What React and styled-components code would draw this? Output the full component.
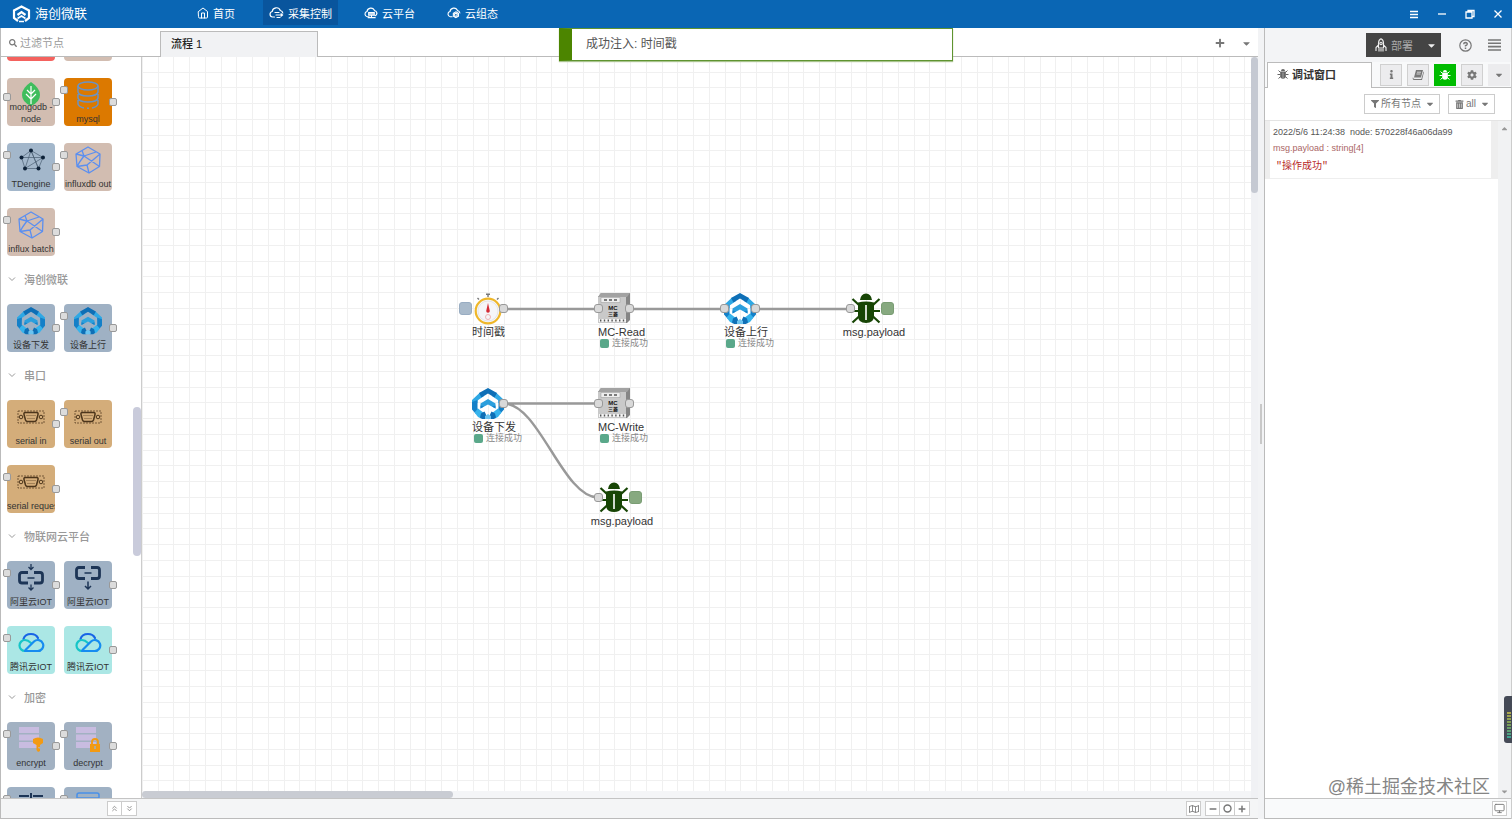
import React from 'react'
import styled, { createGlobalStyle } from 'styled-components'
import { FaSearch, FaPlus, FaMinus, FaCaretDown, FaCaretUp, FaInfo, FaCog, FaFilter, FaTrashAlt, FaRegMap } from 'react-icons/fa'
import { FiHome } from 'react-icons/fi'
import { LuMonitor, LuChevronsUp, LuChevronsDown } from 'react-icons/lu'

const GlobalStyle = createGlobalStyle`
    * { box-sizing: border-box; }
    body { margin: 0; overflow: hidden; }
    body, button, input {
        font-family: "Liberation Sans", "Noto Sans CJK SC", sans-serif;
        font-size: 11px;
        color: #444;
    }
    button { padding: 0; border: 0; background: none; cursor: pointer; }
    svg { display: block; flex: none; }
`

const Page = styled.div`
    display: flex;
    flex-direction: column;
    height: 100vh;
    background: #fff;
`

/* top bar */

const Header = styled.header`
    display: flex;
    flex: none;
    height: 28px;
    background: #0a66b4;
    color: #fff;
`

const Brand = styled.div`
    display: flex;
    align-items: center;
    gap: 4px;
    width: 191px;
    padding-left: 12px;
    font-size: 13px;
    line-height: 16px;
`

const Nav = styled.nav`
    display: flex;
    gap: 20px;
    flex: 1;
    height: 25px;
`

const NavLink = styled.a`
    display: flex;
    align-items: center;
    gap: 4px;
    padding: 0 6px;
    color: #fff;
    text-decoration: none;
    white-space: nowrap;
    background: ${props => props.$active ? '#09559d' : 'transparent'};
    &:first-child { margin-right: 2px; }
`

const WindowButtons = styled.div`
    display: flex;
    align-items: center;
    gap: 16px;
    padding-right: 8px;
`

const WindowButton = styled.button`
    width: 12px;
    height: 12px;
    color: #fff;
`

const Main = styled.div`
    display: flex;
    flex: 1;
    min-height: 0;
`

const Editor = styled.div`
    display: flex;
    flex-direction: column;
    flex: 1;
    min-width: 0;
    border-left: 1px solid #bbb;
`

const TopRow = styled.div`
    display: flex;
    flex: none;
    height: 29px;
    border-bottom: 1px solid #bbb;
`

const SearchBox = styled.label`
    display: flex;
    align-items: center;
    gap: 3px;
    width: 159px;
    padding: 2px 0 0 8px;
    color: #777;
`

const SearchInput = styled.input`
    width: 120px;
    padding: 0;
    border: 0;
    outline: none;
    &::placeholder { color: #999; }
`

const Tabs = styled.div`
    display: flex;
    align-items: flex-end;
    flex: 1;
`

const FlowTab = styled.button`
    width: 158px;
    height: 26px;
    margin-bottom: -1px;
    padding: 0 0 4px 10px;
    border: 1px solid #bbb;
    border-bottom: 0;
    background: #f1f2f4;
    color: #222;
    font-weight: 500;
    text-align: left;
`

const TabTools = styled.div`
    display: flex;
    align-items: center;
    gap: 16px;
    padding: 2px 6px 0 0;
    button { color: #777; }
`

const Workspace = styled.div`
    display: flex;
    flex: 1;
    min-height: 0;
`

/* palette */

const Palette = styled.aside`
    position: relative;
    width: 141px;
    overflow: hidden;
    border-right: 1px solid #ccc;
`

const PaletteList = styled.div`
    margin-top: -44px;
    padding-left: 6px;
`

const PaletteThumb = styled.div`
    position: absolute;
    top: 350px;
    right: 0;
    width: 8px;
    height: 149px;
    border-radius: 4px;
    background: #c9cbdb;
`

const Category = styled.button`
    display: flex;
    align-items: center;
    gap: 7px;
    height: 48px;
    padding-bottom: 2px;
    color: #999;
    font-weight: 500;
`

const TileGrid = styled.div`
    display: grid;
    grid-template-columns: 48px 48px;
    gap: 17px 9px;
`

const TileBox = styled.div`
    position: relative;
    height: 48px;
    border-radius: 4px;
    background: ${props => props.$color};
`

const TileIcon = styled.div`
    display: flex;
    justify-content: center;
    padding-top: 3px;
`

const TileLabel = styled.div`
    position: absolute;
    left: 0;
    right: 0;
    bottom: 1px;
    overflow: hidden;
    font-size: 9px;
    line-height: 12px;
    text-align: center;
    white-space: ${props => props.$wrap ? 'normal' : 'nowrap'};
    color: #333;
`

const TilePort = styled.i`
    position: absolute;
    top: ${props => props.$top}px;
    ${props => props.$side}: ${props => props.$side === 'left' ? -4 : -5}px;
    width: 8px;
    height: 8px;
    border: 1px solid #999;
    border-radius: 2px;
    background: #dcdcdc;
`

/* canvas */

const CanvasColumn = styled.div`
    display: flex;
    flex-direction: column;
    flex: 1;
    min-width: 0;
`

const Canvas = styled.div`
    position: relative;
    flex: 1;
    overflow: hidden;
`

const CanvasDrawing = styled.svg`
    width: 100%;
    height: 100%;
`

const HScroll = styled.div`
    height: 7px;
    background: #f4f5f7;
    &::before {
        content: '';
        display: block;
        width: 28%;
        height: 7px;
        border-radius: 4px;
        background: #c9ccd3;
    }
`

const VScroll = styled.div`
    width: 7px;
    background: #f0f1f4;
    &::before {
        content: '';
        display: block;
        width: 7px;
        height: 136px;
        border-radius: 4px;
        background: #c5c9d2;
    }
`

const FlowNode = styled.div`
    position: absolute;
    left: ${props => props.$x}px;
    top: ${props => props.$y}px;
    width: 32px;
`

const NodeIcon = styled.div`
    height: 32px;
`

const NodeLabel = styled.div`
    display: flex;
    justify-content: ${props => props.$center ? 'center' : 'flex-start'};
    margin: 0 ${props => props.$center ? '-24px 0 -8px' : '0'};
    padding-top: 1px;
    line-height: 13px;
    white-space: nowrap;
    color: #333;
`

const NodeStatus = styled.div`
    display: flex;
    align-items: center;
    gap: 3px;
    padding-left: 2px;
    font-size: 9px;
    line-height: 9px;
    white-space: nowrap;
    color: #888;
    &::before {
        content: '';
        flex: none;
        width: 9px;
        height: 9px;
        border-radius: 2px;
        background: #5aa88a;
    }
`

const NodePort = styled.i`
    position: absolute;
    top: 11px;
    ${props => props.$side}: -4px;
    width: 9px;
    height: 9px;
    border: 1px solid #999;
    border-radius: 3px;
    background: #d9d9d9;
`

const NodeButton = styled.button`
    position: absolute;
    top: 9px;
    ${props => props.$side}: ${props => props.$side === 'left' ? -13 : -12}px;
    width: 13px;
    height: 13px;
    border: 1px solid ${props => props.$line};
    border-radius: 3px;
    background: ${props => props.$color};
`

const Footer = styled.footer`
    display: flex;
    align-items: center;
    flex: none;
    height: 21px;
    border-top: 1px solid #c4c4c4;
    border-bottom: 1px solid #bbb;
    background: ${props => props.$light ? '#f9fafb' : '#f4f5f6'};
`

const FooterGroup = styled.div`
    display: flex;
    margin-left: ${props => props.$push ? 'auto' : '4px'};
    margin-right: ${props => props.$end || 0}px;
`

const FooterButton = styled.button`
    display: flex;
    align-items: center;
    justify-content: center;
    width: 15px;
    height: 15px;
    border: 1px solid #ccc;
    background: #fff;
    color: #777;
    & + & { border-left: 0; }
`

const PaletteTools = styled.div`
    display: flex;
    justify-content: flex-end;
    width: 136px;
`

const Separator = styled.div`
    display: flex;
    align-items: center;
    justify-content: center;
    width: 6px;
    background: #f2f3f5;
    &::before {
        content: '';
        width: 2px;
        height: 40px;
        background: #c8c8c8;
    }
`

/* sidebar */

const Sidebar = styled.aside`
    display: flex;
    flex-direction: column;
    width: 248px;
    border-left: 1px solid #bbb;
    border-right: 1px solid #ccc;
`

const SidebarTop = styled.div`
    display: flex;
    align-items: center;
    justify-content: flex-end;
    flex: none;
    height: 34px;
    padding-right: 10px;
    background: #f3f4f6;
`

const Deploy = styled.button`
    display: flex;
    align-items: center;
    gap: 4px;
    height: 24px;
    margin-right: 18px;
    padding: 0 4px 0 9px;
    background: #444;
    color: #eee;
    span { margin-right: 9px; color: #aaa; }
`

const TopButton = styled.button`
    margin-left: ${props => props.$gap || 0}px;
    color: #777;
`

const SidebarTabs = styled.div`
    display: flex;
    align-items: center;
    flex: none;
    height: 26px;
    padding-left: 2px;
    border-bottom: 1px solid #bbb;
    background: #f8f9fa;
`

const SidebarTab = styled.button`
    display: flex;
    align-items: center;
    gap: 3px;
    width: 105px;
    height: 26px;
    padding: 0 0 2px 9px;
    border: 1px solid #bbb;
    border-bottom: 0;
    background: #fff;
    color: #333;
    font-weight: bold;
    svg { color: #666; }
`

const TabButton = styled.button`
    display: flex;
    align-items: center;
    justify-content: center;
    width: 22px;
    height: 22px;
    margin-left: ${props => props.$first ? 8 : 5}px;
    border: 1px solid ${props => props.$active ? '#0b0' : '#d0d0d0'};
    background: ${props => props.$active ? '#00bc00' : '#ececee'};
    color: ${props => props.$active ? '#fff' : '#777'};
    &:last-child { border-color: #ececee; }
`

const DebugTools = styled.div`
    display: flex;
    align-items: center;
    justify-content: flex-end;
    gap: 8px;
    flex: none;
    height: 33px;
    padding-right: 16px;
    border-bottom: 1px solid #e4e4e4;
`

const ToolButton = styled.button`
    display: flex;
    align-items: center;
    gap: 2px;
    height: 20px;
    padding: 0 4px 0 6px;
    border: 1px solid #ccc;
    background: #fff;
    color: #777;
    font-size: 10px;
    line-height: 14px;
    svg:last-child { margin-left: 2px; }
`

const DebugBody = styled.div`
    display: flex;
    flex: 1;
    min-height: 0;
`

const DebugList = styled.div`
    flex: 1;
`

const Message = styled.div`
    height: 58px;
    padding: 5px 0 0 3px;
    border: solid #eee;
    border-width: 0 7px 1px 5px;
    font-size: 9px;
    line-height: 12px;
    white-space: nowrap;
`

const Meta = styled.div`
    display: flex;
    gap: 5px;
    color: #555;
`

const Topic = styled.div`
    padding-top: 4px;
    color: #a66;
`

const Value = styled.div`
    padding: 5px 0 0 3px;
    font-family: "Liberation Mono", "Noto Sans CJK SC", monospace;
    font-size: 10px;
    line-height: 16px;
    color: #b72828;
`

const DebugScroll = styled.div`
    display: flex;
    flex-direction: column;
    align-items: center;
    justify-content: space-between;
    width: 13px;
    padding: 3px 0 2px;
    background: #f1f2f3;
    color: #999;
`

/* overlays */

const Notification = styled.div`
    position: absolute;
    top: 28px;
    left: 50%;
    width: 394px;
    height: 33px;
    margin-left: -197px;
    padding-left: 14px;
    border: 1px solid #5f9430;
    border-left: 13px solid #4c8500;
    box-shadow: 0 1px 1px #a9c48f;
    background: #fff;
    font-size: 12px;
    line-height: 30px;
    color: #555;
`

const Watermark = styled.div`
    position: absolute;
    right: 22px;
    bottom: 19px;
    font-size: 18px;
    line-height: 26px;
    color: #858585;
`

const Meter = styled.div`
    position: absolute;
    right: 0;
    bottom: 76px;
    width: 8px;
    height: 47px;
    padding: 15px 1px 5px 3px;
    border-radius: 3px 0 0 3px;
    background: #454a56;
    &::before {
        content: '';
        display: block;
        height: 27px;
        background: repeating-linear-gradient(#454a56 0 1px, transparent 1px 3px), linear-gradient(#b5a94c, #7a9c55, #3aa596);
    }
`

/* icons */

const LogoIcon = () => (
    <svg width="19" height="18" viewBox="0 0 19 18" fill="none" stroke="#fff" strokeWidth="2.2">
        <path d="M6 16 L2 13 V5.5 L9.5 1.5 L17 5.5 V13 L13 16" />
        <path d="M5.5 10 L9.5 7 L13.5 10" />
        <path d="M5.5 13.5 L9.5 11 L13.5 13.5 M7 16.5 H12" strokeWidth="1.6" />
    </svg>
)

const CloudIcon = ({ kind }) => (
    <svg width={kind === 'flow' ? 15 : 14} height="13" viewBox="0 0 15 13" fill="none" stroke="currentColor" strokeWidth="1.2" strokeLinecap="round">
        <path d="M5.5 11 H3.5 A2.8 2.8 0 0 1 3.2 5.5 A4.2 4.2 0 0 1 11.3 4.5 A3 3 0 0 1 13.8 7" />
        {kind === 'flow' && <path d="M6 6.5 H10 M7 9 H13 M12 7.8 L13.5 9 L12 10.2 M8 11.5 H11" />}
        {kind === 'server' && <path d="M5 6.5 H11 V9.5 H5 Z M6 8 H10 M8 9.5 V12 M4.5 12 H12 M13.8 7 A3 3 0 0 1 12 10" />}
        {kind === 'gear' && <path d="M9.5 5.8 L12.3 7.4 V10.5 L9.5 12 L6.8 10.5 V7.4 Z M8 9 A1.5 1.5 0 1 0 11 9 A1.5 1.5 0 1 0 8 9" />}
    </svg>
)

const SmallBug = () => (
    <svg width="12" height="12" viewBox="0 0 12 12">
        <path fill="currentColor" d="M4 3 A2 2 0 0 1 8 3 Z M3.2 3.6 H8.8 V8 A2.8 2.8 0 0 1 3.2 8 Z" />
        <path fill="none" stroke="currentColor" d="M1.5 2.5 L3.5 4.5 M10.5 2.5 L8.5 4.5 M.5 6.5 H3.5 M8.5 6.5 H11.5 M1.5 10.5 L3.7 8.5 M10.5 10.5 L8.3 8.5" />
        <path stroke="#fff" strokeOpacity=".6" strokeWidth=".7" d="M6 4.5 V10" />
    </svg>
)

const BookIcon = () => (
    <svg width="12" height="11" viewBox="0 0 12 11">
        <path fill="currentColor" d="M4 1 H11 L9 8.5 H2 Z M1 8 Q1 10 2.5 10 H9.3 L11.5 2.5 L12 3 L10 11 H2 Q0 10.5 1 8 Z" />
        <path stroke="#ececee" strokeWidth=".8" d="M5 3.2 H9 M4.5 5 H8.5" />
    </svg>
)

const HelpIcon = () => (
    <svg width="13" height="13" viewBox="0 0 13 13" fill="none" stroke="currentColor" strokeWidth="1.2">
        <circle cx="6.5" cy="6.5" r="5.7" />
        <path strokeWidth="1.5" d="M4.7 5.3 Q4.8 3.6 6.5 3.6 Q8.4 3.7 8.2 5.2 Q8 6.1 6.5 6.7 V7.6 M6.5 8.6 V10" />
    </svg>
)

const MenuIcon = () => (
    <svg width="13" height="12" viewBox="0 0 13 12" stroke="currentColor" strokeWidth="1.6">
        <path d="M0 1 H13 M0 4.3 H13 M0 7.6 H13 M0 11 H13" />
    </svg>
)

const RocketIcon = () => (
    <svg width="12" height="14" viewBox="0 0 12 14" fill="none" stroke="currentColor" strokeWidth="1.1">
        <path d="M3.5 10 V5 Q3.5 2 6 .8 Q8.5 2 8.5 5 V10 Z M3.5 7 L1 9.5 V13 M8.5 7 L11 9.5 V13 M4 11 V13.5 M6 11 V13.5 M8 11 V13.5" />
        <circle cx="6" cy="5.5" r="1.2" />
    </svg>
)

const DeviceIcon = ({ size = 32 }) => (
    <svg width={size} height={size} viewBox="0 0 32 32">
        <path fill="#2fa8e4" d="M8 4.5 L12 8 L5.5 12.5 V15 H0 V12 Z" />
        <path fill="#2fa8e4" d="M24 4.5 L20 8 L26.5 12.5 V15 H32 V12 Z" />
        <path fill="#0e6fb6" d="M16 0 L25 5 L22.5 9.5 L16 5.5 L9.5 9.5 L7 5 Z" />
        <path fill="#1480c8" d="M0 14 L5.5 12 V20.5 L7.5 22.5 L4 26 L0 21.5 Z" />
        <path fill="#1480c8" d="M32 14 L26.5 12 V20.5 L24.5 22.5 L28 26 L32 21.5 Z" />
        <path fill="#36b3ec" d="M2.5 24.5 L6 20.5 L12.5 25.5 L9 30.5 L6 29 Z" />
        <path fill="#36b3ec" d="M29.5 24.5 L26 20.5 L19.5 25.5 L23 30.5 L26 29 Z" />
        <path fill="#0e6fb6" d="M8 29.5 L9 25.5 L12.5 23.5 L14 26.5 V31 H10 Z" />
        <path fill="#0e6fb6" d="M24 29.5 L23 25.5 L19.5 23.5 L18 26.5 V31 H22 Z" />
        <path fill="#2b9fdd" d="M16 11 L23.5 15.5 V20.5 L16 16.5 L8.5 20.5 V15.5 Z" />
        <path fill="#1480c8" d="M8.5 17.5 L12 18.5 L8.5 20.5 Z M23.5 17.5 L20 18.5 L23.5 20.5 Z" />
        <path fill="#6bc4f0" d="M16 26 L19 28 V31 H13 V28 Z" />
    </svg>
)

const PlcIcon = () => (
    <svg width="32" height="31" viewBox="0 0 32 31">
        <path fill="#858585" d="M0 4 L3 0 H32 V27 L29 30 H0 Z" />
        <path fill="#a2a2a2" d="M0 4 L3 0 H32 L29 4 Z" />
        <path fill="#c9c9c9" d="M0 4 H28 V30 H0 Z" />
        <path fill="#eee" stroke="#999" strokeWidth=".5" d="M3 4.5 H22 V9.5 H3 Z" />
        <path stroke="#555" strokeWidth="1.4" strokeDasharray="3 2" d="M6 7 H20" />
        <path stroke="#f4f4f4" strokeWidth="3" d="M1 27.5 H28" />
        <path stroke="#555" strokeWidth="2" strokeDasharray="1.4 2.4" d="M2 27.5 H28" />
        <text x="15" y="17" textAnchor="middle" fontSize="6" fontWeight="bold" fill="#111">MC</text>
        <text x="15" y="23" textAnchor="middle" fontSize="5" fontWeight="bold" fill="#111">三菱</text>
    </svg>
)

const ClockIcon = () => (
    <svg width="32" height="32" viewBox="0 0 32 32">
        <path fill="none" stroke="#777" strokeWidth="1.4" d="M14 1.3 H18 M16 1 V4 M5.5 5 L7 6.5 M26.5 5 L25 6.5" />
        <circle cx="16" cy="18" r="12.3" fill="#f6f6f8" stroke="#efb72a" strokeWidth="2.2" />
        <circle cx="16" cy="18" r="10" fill="none" stroke="#d6d8de" strokeWidth=".6" />
        <path fill="#d42b35" d="M16 10 L17.8 18 A1.8 1.8 0 0 1 14.2 18 Z" />
        <circle cx="16" cy="24" r="2.5" fill="none" stroke="#efb4b4" />
    </svg>
)

const BugIcon = () => (
    <svg width="32" height="32" viewBox="0 0 32 32">
        <path fill="#174505" d="M10 7 Q11 .5 16 .5 Q21 .5 22 7 Z M8 9.5 Q16 7.5 24 9.5 V23 Q24 30 16 30 Q8 30 8 23 Z" />
        <path stroke="#fff" strokeWidth="1.6" d="M16 12 V27" />
        <path fill="none" stroke="#174505" strokeWidth="2.2" d="M2.5 6 L9 12 M29.5 6 L23 12 M2 18 H9 M23 18 H30 M2.5 29.5 L9 23.5 M29.5 29.5 L23 23.5" />
    </svg>
)

const tileDrawings = {
    leaf: (
        <g>
            <path fill="#3fbd5d" d="M14 1 Q23 7 23 14 Q23 21 14 25 Q5 21 5 14 Q5 7 14 1 Z" />
            <path fill="none" stroke="#fff" strokeWidth="1.2" d="M14 5 V23 M14 13 L10 9 M14 13 L18 9 M14 18 L9 13 M14 18 L19 13" />
        </g>
    ),
    database: (
        <g fill="none" stroke="#6a93c4" strokeWidth="1.5">
            <ellipse cx="14" cy="5" rx="10" ry="4" />
            <path d="M4 5 V11 Q5 15 14 15 Q23 15 24 11 V5 M4 13 V17 Q5 21 14 21 Q23 21 24 17 V13 M4 19 V23 Q5 26 10 27 M13 27.2 H15 M18 27 Q23 26 24 23 V19" />
        </g>
    ),
    star: (
        <g>
            <path fill="none" stroke="#4b5e72" strokeWidth=".7" d="M14 4.5 L26 11.5 L21.5 22.5 H8 L4.5 11.5 Z L21.5 22.5 L14 4.5 L8 22.5 L26 11.5 H4.5" />
            {[[14, 4.5], [26, 11.5], [21.5, 22.5], [8, 22.5], [4.5, 11.5]].map(([x, y]) => (
                <circle key={x} cx={x} cy={y} r="2" fill="#0d2138" />
            ))}
        </g>
    ),
    influx: (
        <path fill="none" stroke="#5b8ff0" strokeWidth="1.3" strokeLinejoin="round" d="M14 1 L26 8 L25.5 20.5 L15 27 L3 20.5 L2 8 Z M8 4.5 L10 10 L25.5 20.5 M2 8 L10 10 L22 6 M10 10 Q6 15 3 20.5 M3 20.5 L13 19 L26 8 M13 19 L15 27" />
    ),
    device: <DeviceIcon size={28} />,
    serial: (
        <g fill="none" stroke="#4c351b">
            <path strokeWidth=".7" strokeDasharray="2 1" d="M1 8 H27 V20 H1 Z" />
            <path strokeWidth="1.5" d="M8.5 9.5 H19.5 Q21.5 9.5 21 11.5 L19.5 17 Q19 18.5 17.5 18.5 H10.5 Q9 18.5 8.5 17 L7 11.5 Q6.5 9.5 8.5 9.5 Z" />
            <path strokeWidth=".7" strokeDasharray="1 1" d="M9.5 12.5 H19 M10.5 15.5 H18" />
            <circle cx="4" cy="14" r="1.8" />
            <circle cx="24" cy="14" r="1.8" />
        </g>
    ),
    bracketBoth: (
        <g fill="none" stroke="#1d3556">
            <path strokeWidth="2.8" d="M11 8.5 H5 Q2.5 8.5 2.5 11 V16.5 Q2.5 19 5 19 H11 M17 8.5 H23 Q25.5 8.5 25.5 11 V16.5 Q25.5 19 23 19 H17" />
            <path strokeWidth="1.3" d="M10.5 14 H17.5 M14 0 V5 M11.5 3 L14 5.5 L16.5 3 M14 20.5 V26 M11.5 23.5 L14 26 L16.5 23.5" />
        </g>
    ),
    bracketDown: (
        <g fill="none" stroke="#1d3556">
            <path strokeWidth="2.8" d="M11 3.5 H5 Q2.5 3.5 2.5 6 V12 Q2.5 14.5 5 14.5 H11 M17 3.5 H23 Q25.5 3.5 25.5 6 V12 Q25.5 14.5 23 14.5 H17" />
            <path strokeWidth="1.5" d="M10.5 9 H17.5 M14 17.5 V25 M11 22 L14 25 L17 22" />
        </g>
    ),
    cloud: (
        <g fill="none" strokeWidth="2.2" strokeLinecap="round">
            <path stroke="#1764e6" d="M6.5 10 Q8 5 14 5 Q19 5 21 9" />
            <path stroke="#16c5c8" d="M8 22 A5.5 5.5 0 0 1 8 11 Q11 11 14 14" />
            <path stroke="#168cf0" d="M8 22 H20.5 A5.5 5.5 0 1 0 17 12.5 L8.5 21" />
        </g>
    ),
    encrypt: (
        <g>
            <path fill="#c8bce0" d="M2 2 H22 V8 H2 Z M2 9.5 H22 V15.5 H2 Z M2 17 H22 V23 H2 Z" />
            <path fill="#f39a12" d="M16 14 Q21 11 26 14 V18 L23 20 V22 H21.5 V23.5 H23 V26 L21 27 L19.5 25 V20 L16 18 Z" />
        </g>
    ),
    decrypt: (
        <g>
            <path fill="#c8bce0" d="M2 2 H22 V8 H2 Z M2 9.5 H22 V15.5 H2 Z M2 17 H22 V23 H2 Z" />
            <path fill="none" stroke="#f39a12" strokeWidth="1.8" d="M18 19 V17 A3 3 0 0 1 24 17 V19" />
            <path fill="#f39a12" d="M16 19 H26 V27 H16 Z" />
            <path stroke="#a2b1c2" strokeWidth="1.5" d="M21 21 V24" />
        </g>
    ),
    hidden: <path fill="none" stroke="#1d3556" strokeWidth="2" d="M2 6 H12 M16 6 H26 M14 3 V12" />,
    window: <path fill="none" stroke="#4a90e8" strokeWidth="1.5" d="M3 20 V5 Q3 3 5 3 H23 Q25 3 25 5 V20 M3 8 H25" />,
}

/* palette content */

const palette = [
    {
        tiles: [
            { label: 'oracledb', color: '#f4625e', icon: 'database' },
            { label: 'influxdb in', color: '#d2bdb1', icon: 'influx' },
            { label: 'mongodb - node', color: '#d2bdb1', icon: 'leaf', input: 15, output: true, wrap: true },
            { label: 'mysql', color: '#dc7900', icon: 'database', input: 8, output: true },
            { label: 'TDengine', color: '#a3b7cb', icon: 'star', input: 8, output: true },
            { label: 'influxdb out', color: '#d2bdb1', icon: 'influx', input: 8 },
            { label: 'influx batch', color: '#d2bdb1', icon: 'influx', input: 8, output: true },
        ],
    },
    {
        name: '海创微联',
        tiles: [
            { label: '设备下发', color: '#9fb1c4', icon: 'device', output: true },
            { label: '设备上行', color: '#9fb1c4', icon: 'device', input: 8, output: true },
        ],
    },
    {
        name: '串口',
        tiles: [
            { label: 'serial in', color: '#d4ad7a', icon: 'serial', output: true },
            { label: 'serial out', color: '#d4ad7a', icon: 'serial', input: 8 },
            { label: 'serial request', color: '#d4ad7a', icon: 'serial', input: 8, output: true },
        ],
    },
    {
        name: '物联网云平台',
        tiles: [
            { label: '阿里云IOT', color: '#9fb1c4', icon: 'bracketBoth', input: 8, output: true },
            { label: '阿里云IOT', color: '#9fb1c4', icon: 'bracketDown', output: true },
            { label: '腾讯云IOT', color: '#abe7e5', icon: 'cloud', input: 8 },
            { label: '腾讯云IOT', color: '#abe7e5', icon: 'cloud', output: true },
        ],
    },
    {
        name: '加密',
        tiles: [
            { label: 'encrypt', color: '#a2b1c2', icon: 'encrypt', input: 8, output: true },
            { label: 'decrypt', color: '#a2b1c2', icon: 'decrypt', input: 8, output: true },
            { label: '', color: '#9fb1c4', icon: 'hidden', input: 8 },
            { label: '', color: '#9fb1c4', icon: 'window', input: 8 },
        ],
    },
]

const nodes = [
    { x: 330, y: 236, icon: <ClockIcon />, label: '时间戳', output: true, button: 'left' },
    { x: 456, y: 236, icon: <PlcIcon />, label: 'MC-Read', status: true, input: true, output: true },
    { x: 582, y: 236, icon: <DeviceIcon />, label: '设备上行', status: true, input: true, output: true },
    { x: 708, y: 236, icon: <BugIcon />, label: 'msg.payload', input: true, button: 'right', center: true },
    { x: 330, y: 331, icon: <DeviceIcon />, label: '设备下发', status: true, output: true },
    { x: 456, y: 331, icon: <PlcIcon />, label: 'MC-Write', status: true, input: true, output: true },
    { x: 456, y: 425, icon: <BugIcon />, label: 'msg.payload', input: true, button: 'right', center: true },
]

const windowButtons = [
    { name: 'menu', d: 'M2 3.5 H10 M2 6.5 H10 M2 9.5 H10' },
    { name: 'minimize', d: 'M2 6 H10' },
    { name: 'restore', d: 'M2 4 H8 V10 H2 Z M4 4 V2.5 H10 V8.5 H8' },
    { name: 'close', d: 'M2.5 2.5 L9.5 9.5 M9.5 2.5 L2.5 9.5' },
]

const Tile = ({ tile }) => (
    <TileBox $color={tile.color}>
        <TileIcon>
            <svg width="28" height="28" viewBox="0 0 28 28">{tileDrawings[tile.icon]}</svg>
        </TileIcon>
        <TileLabel $wrap={tile.wrap}>{tile.label}</TileLabel>
        {tile.input && <TilePort $side="left" $top={tile.input} />}
        {tile.output && <TilePort $side="right" $top={20} />}
    </TileBox>
)

const App = () => (
    <Page>
        <GlobalStyle />
        <Header>
            <Brand><LogoIcon />海创微联</Brand>
            <Nav>
                <NavLink href="#home"><FiHome size={12} />首页</NavLink>
                <NavLink href="#control" $active><CloudIcon kind="flow" />采集控制</NavLink>
                <NavLink href="#cloud"><CloudIcon kind="server" />云平台</NavLink>
                <NavLink href="#scada"><CloudIcon kind="gear" />云组态</NavLink>
            </Nav>
            <WindowButtons>
                {windowButtons.map(button => (
                    <WindowButton key={button.name} aria-label={button.name}>
                        <svg width="12" height="12" viewBox="0 0 12 12" fill="none" stroke="currentColor" strokeWidth="1.3"><path d={button.d} /></svg>
                    </WindowButton>
                ))}
            </WindowButtons>
        </Header>
        <Main>
            <Editor>
                <TopRow>
                    <SearchBox>
                        <FaSearch size={8} />
                        <SearchInput type="text" placeholder="过滤节点" aria-label="过滤节点" />
                    </SearchBox>
                    <Tabs><FlowTab>流程 1</FlowTab></Tabs>
                    <TabTools>
                        <button aria-label="add"><FaPlus size={10} /></button>
                        <button aria-label="list"><FaCaretDown size={11} /></button>
                    </TabTools>
                </TopRow>
                <Workspace>
                    <Palette>
                        <PaletteList>
                            {palette.map((group, index) => (
                                <div key={index}>
                                    {group.name && (
                                        <Category>
                                            <svg width="10" height="8" viewBox="0 0 10 8" fill="none" stroke="#999"><path d="M2 2.5 L5 5.5 L8 2.5" /></svg>
                                            {group.name}
                                        </Category>
                                    )}
                                    <TileGrid>
                                        {group.tiles.map((tile, i) => <Tile key={i} tile={tile} />)}
                                    </TileGrid>
                                </div>
                            ))}
                        </PaletteList>
                        <PaletteThumb />
                    </Palette>
                    <CanvasColumn>
                        <Canvas>
                            <CanvasDrawing>
                                <defs>
                                    <pattern id="grid" y="-1" width="63" height="63" patternUnits="userSpaceOnUse">
                                        <path fill="none" stroke="#f0f0f0" d="M.5 0 V63 M16.5 0 V63 M31.5 0 V63 M47.5 0 V63 M0 .5 H63 M0 16.5 H63 M0 31.5 H63 M0 47.5 H63" />
                                    </pattern>
                                </defs>
                                <rect width="100%" height="100%" fill="url(#grid)" />
                                <path fill="none" stroke="#999" strokeWidth="2.4" d="M362 252 H456 M488 252 H582 M614 252 H708 M362 346.5 H456 M362 346.5 C397 346.5 421 440.5 456 440.5" />
                            </CanvasDrawing>
                            {nodes.map((node, index) => (
                                <FlowNode key={index} $x={node.x} $y={node.y}>
                                    {node.button === 'left' && <NodeButton $side="left" $color="#a9bacb" $line="#98acc2" aria-label="inject" />}
                                    <NodeIcon>{node.icon}</NodeIcon>
                                    {node.button === 'right' && <NodeButton $side="right" $color="#87a980" $line="#7a9d74" aria-label="debug" />}
                                    {node.input && <NodePort $side="left" />}
                                    {node.output && <NodePort $side="right" />}
                                    <NodeLabel $center={node.center}>{node.label}</NodeLabel>
                                    {node.status && <NodeStatus>连接成功</NodeStatus>}
                                </FlowNode>
                            ))}
                        </Canvas>
                        <HScroll />
                    </CanvasColumn>
                    <VScroll />
                </Workspace>
                <Footer>
                    <PaletteTools>
                        <FooterButton aria-label="collapse"><LuChevronsUp size={9} /></FooterButton>
                        <FooterButton aria-label="expand"><LuChevronsDown size={9} /></FooterButton>
                    </PaletteTools>
                    <FooterGroup $push>
                        <FooterButton aria-label="map"><FaRegMap size={10} /></FooterButton>
                    </FooterGroup>
                    <FooterGroup $end={8}>
                        <FooterButton aria-label="zoom out"><FaMinus size={8} /></FooterButton>
                        <FooterButton aria-label="reset">
                            <svg width="9" height="9" viewBox="0 0 9 9"><circle cx="4.5" cy="4.5" r="3.5" fill="none" stroke="#777" strokeWidth="1.4" /></svg>
                        </FooterButton>
                        <FooterButton aria-label="zoom in"><FaPlus size={8} /></FooterButton>
                    </FooterGroup>
                </Footer>
            </Editor>
            <Separator />
            <Sidebar>
                <SidebarTop>
                    <Deploy>
                        <RocketIcon />
                        <span>部署</span>
                        <FaCaretDown size={11} />
                    </Deploy>
                    <TopButton aria-label="help"><HelpIcon /></TopButton>
                    <TopButton $gap={16} aria-label="menu"><MenuIcon /></TopButton>
                </SidebarTop>
                <SidebarTabs>
                    <SidebarTab><SmallBug />调试窗口</SidebarTab>
                    <TabButton $first aria-label="info"><FaInfo size={9} /></TabButton>
                    <TabButton aria-label="help"><BookIcon /></TabButton>
                    <TabButton $active aria-label="debug"><SmallBug /></TabButton>
                    <TabButton aria-label="config"><FaCog size={10} /></TabButton>
                    <TabButton aria-label="more"><FaCaretDown size={10} /></TabButton>
                </SidebarTabs>
                <DebugTools>
                    <ToolButton><FaFilter size={8} />所有节点<FaCaretDown size={10} /></ToolButton>
                    <ToolButton><FaTrashAlt size={9} />all<FaCaretDown size={10} /></ToolButton>
                </DebugTools>
                <DebugBody>
                    <DebugList>
                        <Message>
                            <Meta><span>2022/5/6 11:24:38</span><span>node: 570228f46a06da99</span></Meta>
                            <Topic>msg.payload : string[4]</Topic>
                            <Value>"操作成功"</Value>
                        </Message>
                    </DebugList>
                    <DebugScroll><FaCaretUp size={9} /><FaCaretDown size={9} /></DebugScroll>
                </DebugBody>
                <Footer $light>
                    <FooterGroup $push $end={4}>
                        <FooterButton aria-label="desktop"><LuMonitor size={11} /></FooterButton>
                    </FooterGroup>
                </Footer>
            </Sidebar>
        </Main>
        <Notification role="status">成功注入: 时间戳</Notification>
        <Watermark>@稀土掘金技术社区</Watermark>
        <Meter />
    </Page>
)

export default App
